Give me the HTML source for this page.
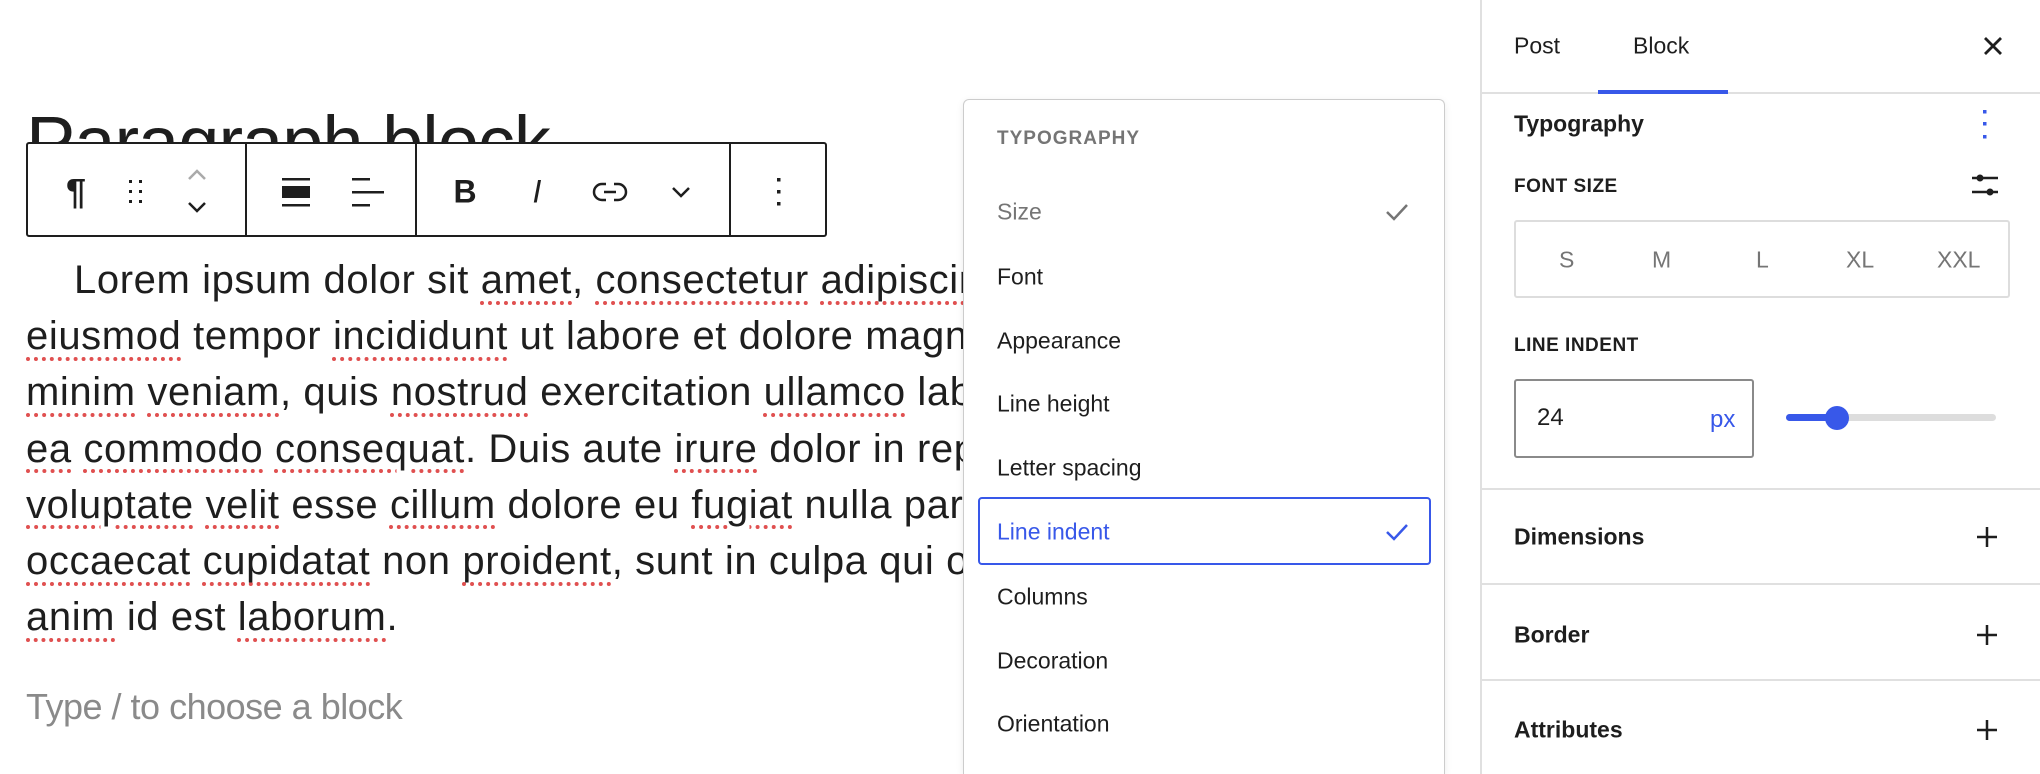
<!DOCTYPE html>
<html><head><meta charset="utf-8"><style>
*{margin:0;padding:0;box-sizing:border-box}
html,body{width:2040px;height:774px;overflow:hidden}
body{background:#fff;font-family:"Liberation Sans",sans-serif;color:#1e1e1e;position:relative}
.abs{position:absolute}
.h1{left:26px;top:100px;font-size:74px;letter-spacing:-1px;white-space:nowrap}
.tb{left:26px;top:142px;width:801px;height:95px;border:2px solid #1e1e1e;border-radius:3px;background:#fff}
.sep{position:absolute;top:0;bottom:0;width:2px;background:#1e1e1e}
.ic{position:absolute;top:48px;transform:translate(-50%,-50%)}
.para{left:26px;top:252px;width:1330px;font-size:40px;line-height:56.2px;letter-spacing:0.6px;text-indent:48px}
.sp{text-decoration:underline dotted #e05050;text-underline-offset:8px}
.ph{left:26px;top:686px;font-size:36px;color:#8a8a8a;letter-spacing:-0.5px}
.dd{left:963px;top:99px;width:482px;height:675px;border:1px solid #ccc;border-bottom:none;border-radius:6px 6px 0 0;background:#fff;box-shadow:0 2px 8px rgba(0,0,0,.08)}
.dd .t{position:absolute;left:33px;font-size:19px;color:#757575;letter-spacing:1px;font-weight:bold}
.it{position:absolute;left:33px;font-size:23px;transform:translateY(-50%)}
.hl{position:absolute;left:14px;top:397px;width:453px;height:68px;border:2px solid #3858e9;border-radius:4px}
.side{left:1480px;top:0;width:560px;height:774px;border-left:2px solid #e0e0e0;background:#fff}
.s{position:absolute;transform:translateY(-50%)}
.lab{font-size:19px;font-weight:bold;letter-spacing:.5px}
.hd{font-size:23px;font-weight:bold}
.hr{position:absolute;left:0;right:0;height:2px;background:#e0e0e0}
</style></head><body>
<div class="abs h1">Paragraph block</div>
<div class="abs para">Lorem ipsum dolor sit <span class="sp">amet</span>, <span class="sp">consectetur</span> <span class="sp">adipiscing</span> elit, sed do <span class="sp">eiusmod</span> tempor <span class="sp">incididunt</span> ut labore et dolore magna aliqua. Ut enim ad <span class="sp">minim</span> <span class="sp">veniam</span>, quis <span class="sp">nostrud</span> exercitation <span class="sp">ullamco</span> laboris nisi ut aliquip ex <span class="sp">ea</span> <span class="sp">commodo</span> <span class="sp">consequat</span>. Duis aute <span class="sp">irure</span> dolor in reprehenderit in <span class="sp">voluptate</span> <span class="sp">velit</span> esse <span class="sp">cillum</span> dolore eu <span class="sp">fugiat</span> nulla pariatur. Excepteur sint <span class="sp">occaecat</span> <span class="sp">cupidatat</span> non <span class="sp">proident</span>, sunt in culpa qui officia deserunt mollit <span class="sp">anim</span> id est <span class="sp">laborum</span>.</div>
<div class="abs ph">Type / to choose a block</div>

<div class="abs tb">
 <div class="sep" style="left:217px"></div><div class="sep" style="left:387px"></div><div class="sep" style="left:701px"></div>
 <div class="ic" style="left:48px;font-size:36px;font-weight:bold">¶</div>
 <svg class="ic" style="left:108px" width="20" height="30" viewBox="0 0 20 30"><g fill="#1e1e1e"><rect x="3" y="3" width="3" height="3"/><rect x="13" y="3" width="3" height="3"/><rect x="3" y="13" width="3" height="3"/><rect x="13" y="13" width="3" height="3"/><rect x="3" y="23" width="3" height="3"/><rect x="13" y="23" width="3" height="3"/></g></svg>
 <svg class="ic" style="left:169px" width="30" height="50" viewBox="0 0 30 50"><path d="M7 12 L15 4 L23 12" stroke="#aaa" stroke-width="2.5" fill="none"/><path d="M7 36 L15 44 L23 36" stroke="#1e1e1e" stroke-width="2.5" fill="none"/></svg>
 <svg class="ic" style="left:268px" width="34" height="34" viewBox="0 0 34 34"><rect x="3" y="3" width="28" height="2.5" fill="#1e1e1e"/><rect x="3" y="11" width="28" height="12" fill="#1e1e1e"/><rect x="3" y="29" width="28" height="2.5" fill="#1e1e1e"/></svg>
 <svg class="ic" style="left:340px" width="36" height="34" viewBox="0 0 36 34"><rect x="2" y="3" width="18" height="2.5" fill="#1e1e1e"/><rect x="2" y="16" width="32" height="2.5" fill="#1e1e1e"/><rect x="2" y="29" width="18" height="2.5" fill="#1e1e1e"/></svg>
 <div class="ic" style="left:437px;font-size:32px;font-weight:bold">B</div>
 <div class="ic" style="left:509px;font-size:32px;font-style:italic">I</div>
 <svg class="ic" style="left:582px" width="36" height="24" viewBox="0 0 36 24"><path d="M14 4 H10 A8 8 0 0 0 10 20 H14 M22 4 H26 A8 8 0 0 1 26 20 H22 M12 12 H24" stroke="#1e1e1e" stroke-width="2.5" fill="none"/></svg>
 <svg class="ic" style="left:653px" width="24" height="16" viewBox="0 0 24 16"><path d="M4 4 L12 12 L20 4" stroke="#1e1e1e" stroke-width="2.5" fill="none"/></svg>
 <svg class="ic" style="left:751px" width="8" height="32" viewBox="0 0 8 32"><g fill="#1e1e1e"><rect x="2" y="2" width="3.5" height="3.5"/><rect x="2" y="14" width="3.5" height="3.5"/><rect x="2" y="26" width="3.5" height="3.5"/></g></svg>
</div>

<div class="abs dd">
 <div class="t" style="top:28px">TYPOGRAPHY</div>
 <div class="it" style="top:112px;color:#757575">Size</div>
 <svg class="s" style="left:420px;top:112px" width="26" height="20" viewBox="0 0 26 20"><path d="M3 10 L10 17 L23 3" stroke="#757575" stroke-width="2.5" fill="none"/></svg>
 <div class="it" style="top:177px">Font</div>
 <div class="it" style="top:241px">Appearance</div>
 <div class="it" style="top:304px">Line height</div>
 <div class="it" style="top:368px">Letter spacing</div>
 <div class="hl"></div>
 <div class="it" style="top:432px;color:#3858e9">Line indent</div>
 <svg class="s" style="left:420px;top:432px" width="26" height="20" viewBox="0 0 26 20"><path d="M3 10 L10 17 L23 3" stroke="#3858e9" stroke-width="2.5" fill="none"/></svg>
 <div class="it" style="top:497px">Columns</div>
 <div class="it" style="top:561px">Decoration</div>
 <div class="it" style="top:624px">Orientation</div>
</div>

<div class="abs side">
 <div class="s" style="left:32px;top:46px;font-size:23px">Post</div>
 <div class="s" style="left:151px;top:46px;font-size:23px">Block</div>
 <div class="hr" style="top:92px"></div>
 <div style="position:absolute;left:116px;top:90px;width:130px;height:4px;background:#3858e9"></div>
 <svg class="s" style="left:499px;top:46px" width="24" height="24" viewBox="0 0 24 24"><path d="M4 4 L20 20 M20 4 L4 20" stroke="#1e1e1e" stroke-width="2.8"/></svg>
 <div class="s hd" style="left:32px;top:124px">Typography</div>
 <svg class="s" style="left:500px;top:124px" width="6" height="30" viewBox="0 0 6 30"><g fill="#3858e9"><rect x="1" y="1" width="3.5" height="3.5"/><rect x="1" y="13" width="3.5" height="3.5"/><rect x="1" y="26" width="3.5" height="3.5"/></g></svg>
 <div class="s lab" style="left:32px;top:187px">FONT SIZE</div>
 <svg class="s" style="left:488px;top:185px" width="30" height="26" viewBox="0 0 30 26"><path d="M2 6 H28 M2 20 H28" stroke="#1e1e1e" stroke-width="2.5"/><circle cx="10" cy="6" r="3.5" fill="#1e1e1e"/><circle cx="20" cy="20" r="3.5" fill="#1e1e1e"/></svg>
 <div style="position:absolute;left:32px;top:220px;width:496px;height:78px;border:2px solid #ddd;border-radius:3px"></div>
 <div class="s" style="left:77px;top:260px;font-size:23px;color:#757575">S</div>
 <div class="s" style="left:170px;top:260px;font-size:23px;color:#757575">M</div>
 <div class="s" style="left:274px;top:260px;font-size:23px;color:#757575">L</div>
 <div class="s" style="left:364px;top:260px;font-size:23px;color:#757575">XL</div>
 <div class="s" style="left:455px;top:260px;font-size:23px;color:#757575">XXL</div>
 <div class="s lab" style="left:32px;top:346px">LINE INDENT</div>
 <div style="position:absolute;left:32px;top:379px;width:240px;height:79px;border:2px solid #8a8a8a;border-radius:3px"></div>
 <div class="s" style="left:55px;top:418px;font-size:24px">24</div>
 <div class="s" style="left:228px;top:420px;font-size:24px;color:#3858e9">px</div>
 <div style="position:absolute;left:304px;top:414px;width:210px;height:7px;background:#ddd;border-radius:4px"></div>
 <div style="position:absolute;left:304px;top:414px;width:52px;height:7px;background:#3858e9;border-radius:4px"></div>
 <div style="position:absolute;left:343px;top:406px;width:24px;height:24px;background:#3858e9;border-radius:50%"></div>
 <div class="hr" style="top:488px"></div>
 <div class="s hd" style="left:32px;top:537px">Dimensions</div>
 <div class="hr" style="top:583px"></div>
 <div class="s hd" style="left:32px;top:635px">Border</div>
 <div class="hr" style="top:679px"></div>
 <div class="s hd" style="left:32px;top:730px">Attributes</div>
 <svg class="s" style="left:493px;top:537px" width="24" height="24" viewBox="0 0 24 24"><path d="M12 2 V22 M2 12 H22" stroke="#1e1e1e" stroke-width="2.5"/></svg>
 <svg class="s" style="left:493px;top:635px" width="24" height="24" viewBox="0 0 24 24"><path d="M12 2 V22 M2 12 H22" stroke="#1e1e1e" stroke-width="2.5"/></svg>
 <svg class="s" style="left:493px;top:730px" width="24" height="24" viewBox="0 0 24 24"><path d="M12 2 V22 M2 12 H22" stroke="#1e1e1e" stroke-width="2.5"/></svg>
</div>
</body></html>
